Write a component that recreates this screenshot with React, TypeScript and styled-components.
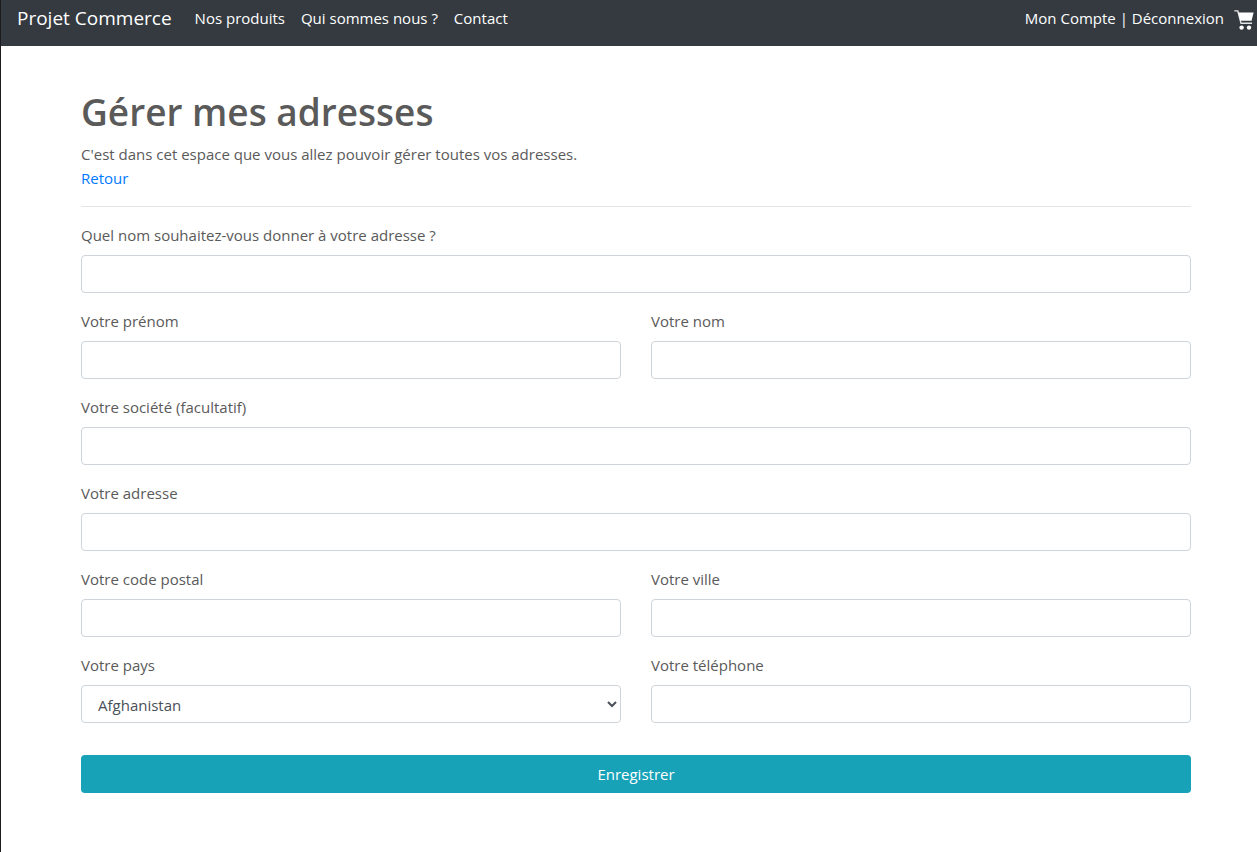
import React from "react";
import styled, { createGlobalStyle } from "styled-components";

const GlobalStyle = createGlobalStyle`
  *, *::before, *::after { box-sizing: border-box; }
  body {
    margin: 0;
    background: #fff;
    color: #5a5a5a;
    font: 400 15px/24px "Segoe UI", "Open Sans", "Noto Sans", sans-serif;
  }
`;

const Page = styled.div`
  min-height: 100vh;
  border-left: 1px solid #1c1c1e;
`;

const Navbar = styled.header`
  display: flex;
  align-items: center;
  justify-content: space-between;
  height: 46px;
  padding: 0 3px 10px 16px;
  background: #343a40;
`;

const NavGroup = styled.nav<{ $gap: number }>`
  display: flex;
  align-items: center;
  gap: ${({ $gap }) => $gap}px;
  color: #fff;
`;

const Brand = styled.a`
  margin-right: 7px;
  color: #fff;
  font-size: 19px;
  line-height: 30px;
  text-decoration: none;
`;

const NavLink = styled.a`
  color: #fff;
  text-decoration: none;
`;

const CartLink = styled(NavLink)`
  padding-top: 3px;
`;

const CartIcon = styled.svg`
  display: block;
  width: 20px;
  height: 20px;
`;

const Main = styled.main`
  padding: 42px 66px 48px 80px;
`;

const Title = styled.h1`
  margin: 0 0 6px;
  font-size: 37px;
  font-weight: 600;
  line-height: 48px;
`;

const Intro = styled.p`
  margin: 0;
`;

const BackLink = styled.a`
  color: #007bff;
  text-decoration: none;
`;

const Divider = styled.hr`
  height: 1px;
  margin: 16px 0;
  border: 0;
  background: #e5e5e5;
`;

const Row = styled.div`
  display: flex;
  gap: 30px;
  margin-bottom: 16px;
`;

const Group = styled.div`
  flex: 1;
  min-width: 0;
`;

const Label = styled.label`
  display: block;
  margin-bottom: 8px;
`;

const Input = styled.input`
  display: block;
  width: 100%;
  height: 38px;
  padding: 6px 12px;
  border: 1px solid #ced4da;
  border-radius: 4px;
  background: #fff;
  color: #495057;
  font: inherit;
`;

const Select = styled.select`
  display: block;
  width: 100%;
  height: 38px;
  padding: 8px 0 6px 12px;
  border: 1px solid #ced4da;
  border-radius: 4px;
  background: #fff;
  color: #495057;
  font: inherit;
`;

const SubmitButton = styled.button`
  display: block;
  width: 100%;
  height: 38px;
  margin-top: 32px;
  padding: 0 12px;
  border: 0;
  border-radius: 4px;
  background: #17a2b8;
  color: #fff;
  font: inherit;
  cursor: pointer;
`;

function Field({ id, label, type = "text" }: { id: string; label: string; type?: string }) {
  return (
    <Group>
      <Label htmlFor={id}>{label}</Label>
      <Input id={id} name={id} type={type} />
    </Group>
  );
}

export default function App() {
  return (
    <Page>
      <GlobalStyle />
      <Navbar>
        <NavGroup $gap={16}>
          <Brand href="#">Projet Commerce</Brand>
          <NavLink href="#produits">Nos produits</NavLink>
          <NavLink href="#equipe">Qui sommes nous ?</NavLink>
          <NavLink href="#contact">Contact</NavLink>
        </NavGroup>
        <NavGroup $gap={10}>
          <span>
            <NavLink href="#compte">Mon Compte</NavLink> | <NavLink href="#deconnexion">Déconnexion</NavLink>
          </span>
          <CartLink href="#panier" aria-label="Panier">
            <CartIcon viewBox="0 0 20 20" fill="none" aria-hidden="true">
              <path d="M0.3 0.9h3.5l3.2 12.4H18" stroke="#e4e5e6" strokeWidth="1.4" />
              <path d="M4.2 2.6H19.6L17.6 10.8H6.3Z" fill="#fff" />
              <circle cx="7.6" cy="17.6" r="2.2" fill="#fff" />
              <circle cx="15" cy="17.6" r="2.2" fill="#fff" />
            </CartIcon>
          </CartLink>
        </NavGroup>
      </Navbar>
      <Main>
        <Title>Gérer mes adresses</Title>
        <Intro>C'est dans cet espace que vous allez pouvoir gérer toutes vos adresses.</Intro>
        <BackLink href="#retour">Retour</BackLink>
        <Divider />
        <form>
          <Row>
            <Field id="name" label="Quel nom souhaitez-vous donner à votre adresse ?" />
          </Row>
          <Row>
            <Field id="firstname" label="Votre prénom" />
            <Field id="lastname" label="Votre nom" />
          </Row>
          <Row>
            <Field id="company" label="Votre société (facultatif)" />
          </Row>
          <Row>
            <Field id="address" label="Votre adresse" />
          </Row>
          <Row>
            <Field id="postal" label="Votre code postal" />
            <Field id="city" label="Votre ville" />
          </Row>
          <Row>
            <Group>
              <Label htmlFor="country">Votre pays</Label>
              <Select id="country" name="country" defaultValue="AF">
                <option value="AF">Afghanistan</option>
              </Select>
            </Group>
            <Field id="phone" label="Votre téléphone" type="tel" />
          </Row>
          <SubmitButton type="submit">Enregistrer</SubmitButton>
        </form>
      </Main>
    </Page>
  );
}
